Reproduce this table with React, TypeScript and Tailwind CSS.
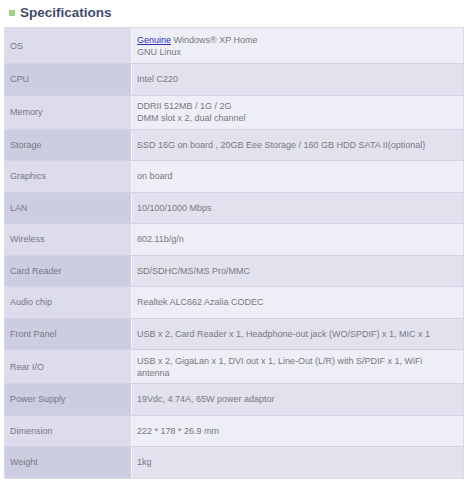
const specs: { label: string; value: React.ReactNode }[] = [
  {
    label: "OS",
    value: (
      <>
        <a href="#" className="text-[#2f2fb8] underline">
          Genuine
        </a>{" "}
        Windows® XP Home
        <br />
        GNU Linux
      </>
    ),
  },
  { label: "CPU", value: "Intel C220" },
  {
    label: "Memory",
    value: (
      <>
        DDRII 512MB / 1G / 2G
        <br />
        DMM slot x 2, dual channel
      </>
    ),
  },
  {
    label: "Storage",
    value: "SSD 16G on board , 20GB Eee Storage / 160 GB HDD SATA II(optional)",
  },
  { label: "Graphics", value: "on board" },
  { label: "LAN", value: "10/100/1000 Mbps" },
  { label: "Wireless", value: "802.11b/g/n" },
  { label: "Card Reader", value: "SD/SDHC/MS/MS Pro/MMC" },
  { label: "Audio chip", value: "Realtek ALC662 Azalia CODEC" },
  {
    label: "Front Panel",
    value: "USB x 2, Card Reader x 1, Headphone-out jack (WO/SPDIF) x 1, MIC x 1",
  },
  {
    label: "Rear I/O",
    value:
      "USB x 2, GigaLan x 1, DVI out x 1, Line-Out (L/R) with S/PDIF x 1, WiFi antenna",
  },
  { label: "Power Supply", value: "19Vdc, 4.74A, 65W power adaptor" },
  { label: "Dimension", value: "222 * 178 * 26.9 mm" },
  { label: "Weight", value: "1kg" },
];

function rowHeight(label: string) {
  if (label === "OS") return "min-h-[35px]";
  if (label === "Memory" || label === "Rear I/O") return "min-h-[34px]";
  return "min-h-[31.5px]";
}

export default function App() {
  return (
    <div className="w-[467px] h-[480px] bg-white font-['Liberation_Sans',Arial,sans-serif]">
      {/* title */}
      <div className="flex items-center gap-[5px] pl-[9px] pt-[3px] h-[23px]">
        <div className="w-[6px] h-[6px] bg-[#a3d184]"></div>
        <h2 className="text-[13.5px] font-bold text-[#3f4c6e] leading-none">
          Specifications
        </h2>
      </div>

      <div className="ml-[4px] mt-[4px] w-[460px] border border-[#dadaea] flex flex-col">
        {specs.map((s, i) => {
          const even = i % 2 === 1;
          return (
            <div
              key={s.label}
              className={`flex text-[9px] leading-[12px] text-[#78787f] ${
                i > 0 ? "border-t border-[#d2d2e4]" : ""
              } ${rowHeight(s.label)}`}
            >
              <div
                className={`w-[127px] shrink-0 flex items-center px-[5px] border-r border-[#f4f4fa] ${
                  even ? "bg-[#cdcde2]" : "bg-[#dcdcec]"
                }`}
              >
                {s.label}
              </div>
              <div
                className={`flex-1 flex items-center pl-[5px] pr-[28px] py-[3px] ${
                  even ? "bg-[#e2e2ef]" : "bg-[#eeeef6]"
                }`}
              >
                <span>{s.value}</span>
              </div>
            </div>
          );
        })}
      </div>
    </div>
  );
}
